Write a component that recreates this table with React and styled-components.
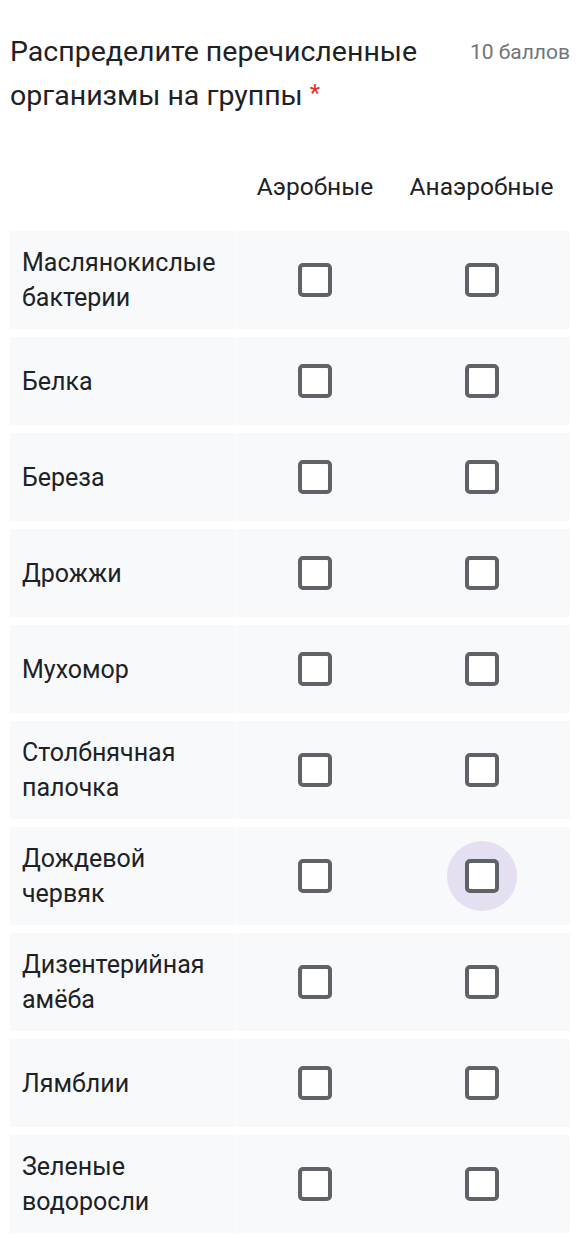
import React from "react";
import styled, { createGlobalStyle } from "styled-components";

const Global = createGlobalStyle`
  html, body { margin: 0; padding: 0; background: #ffffff; }
  body { font-family: Roboto, "Noto Sans", Arial, sans-serif; color: #202124; }
`;

const Page = styled.div`
  width: 576px;
  padding: 30px 6px 0 10px;
  box-sizing: border-box;
`;

const Header = styled.div`
  display: flex;
  justify-content: space-between;
  align-items: flex-start;
`;

const Title = styled.div`
  font-size: 28.5px;
  line-height: 44px;
  max-width: 440px;
`;

const Required = styled.span`
  display: inline-block;
  color: #d93025;
  margin-left: 7px;
  font-size: 24px;
  line-height: 24px;
  vertical-align: 4px;
`;

const Points = styled.div`
  font-size: 21px;
  line-height: 44px;
  color: #70757a;
  white-space: nowrap;
`;

const Grid = styled.div`
  margin-top: 44px;
  display: flex;
  flex-direction: column;
  gap: 8px;
`;

const ColumnsRow = styled.div`
  display: grid;
  grid-template-columns: 227px 156px 177px;
  height: 48px;
  align-items: center;
  margin-bottom: 13px;
`;

const ColHead = styled.div`
  font-size: 24.5px;
  text-align: center;
  white-space: nowrap;
`;

const Row = styled.div`
  display: grid;
  grid-template-columns: 227px 156px 177px;
  min-height: 88px;
  background: #f8f9fa;
  border-radius: 2px;
`;

const Label = styled.div`
  font-size: 25px;
  line-height: 35px;
  padding: 14px 8px 14px 12px;
  display: flex;
  align-items: center;
  border-right: 1px solid rgba(255, 255, 255, 0.8);
`;

const Cell = styled.div`
  display: flex;
  align-items: center;
  justify-content: center;
`;

const Ripple = styled.div`
  width: 70px;
  height: 70px;
  border-radius: 50%;
  display: flex;
  align-items: center;
  justify-content: center;
  background: ${(p) => (p.$active ? "#e4e0f1" : "transparent")};
`;

const Box = styled.div`
  width: 34px;
  height: 34px;
  box-sizing: border-box;
  border: 4px solid #5f6368;
  border-radius: 5px;
  background: #ffffff;
`;

const rows = [
  "Маслянокислые бактерии",
  "Белка",
  "Береза",
  "Дрожжи",
  "Мухомор",
  "Столбнячная палочка",
  "Дождевой червяк",
  "Дизентерийная амёба",
  "Лямблии",
  "Зеленые водоросли",
];

export default function App() {
  return (
    <Page>
      <Global />
      <Header>
        <Title>
          Распределите перечисленные организмы на группы<Required>*</Required>
        </Title>
        <Points>10 баллов</Points>
      </Header>
      <Grid>
        <ColumnsRow>
          <div />
          <ColHead>Аэробные</ColHead>
          <ColHead>Анаэробные</ColHead>
        </ColumnsRow>
        {rows.map((r, i) => (
          <Row key={r}>
            <Label>{r}</Label>
            <Cell>
              <Ripple>
                <Box />
              </Ripple>
            </Cell>
            <Cell>
              <Ripple $active={i === 6}>
                <Box />
              </Ripple>
            </Cell>
          </Row>
        ))}
      </Grid>
    </Page>
  );
}
